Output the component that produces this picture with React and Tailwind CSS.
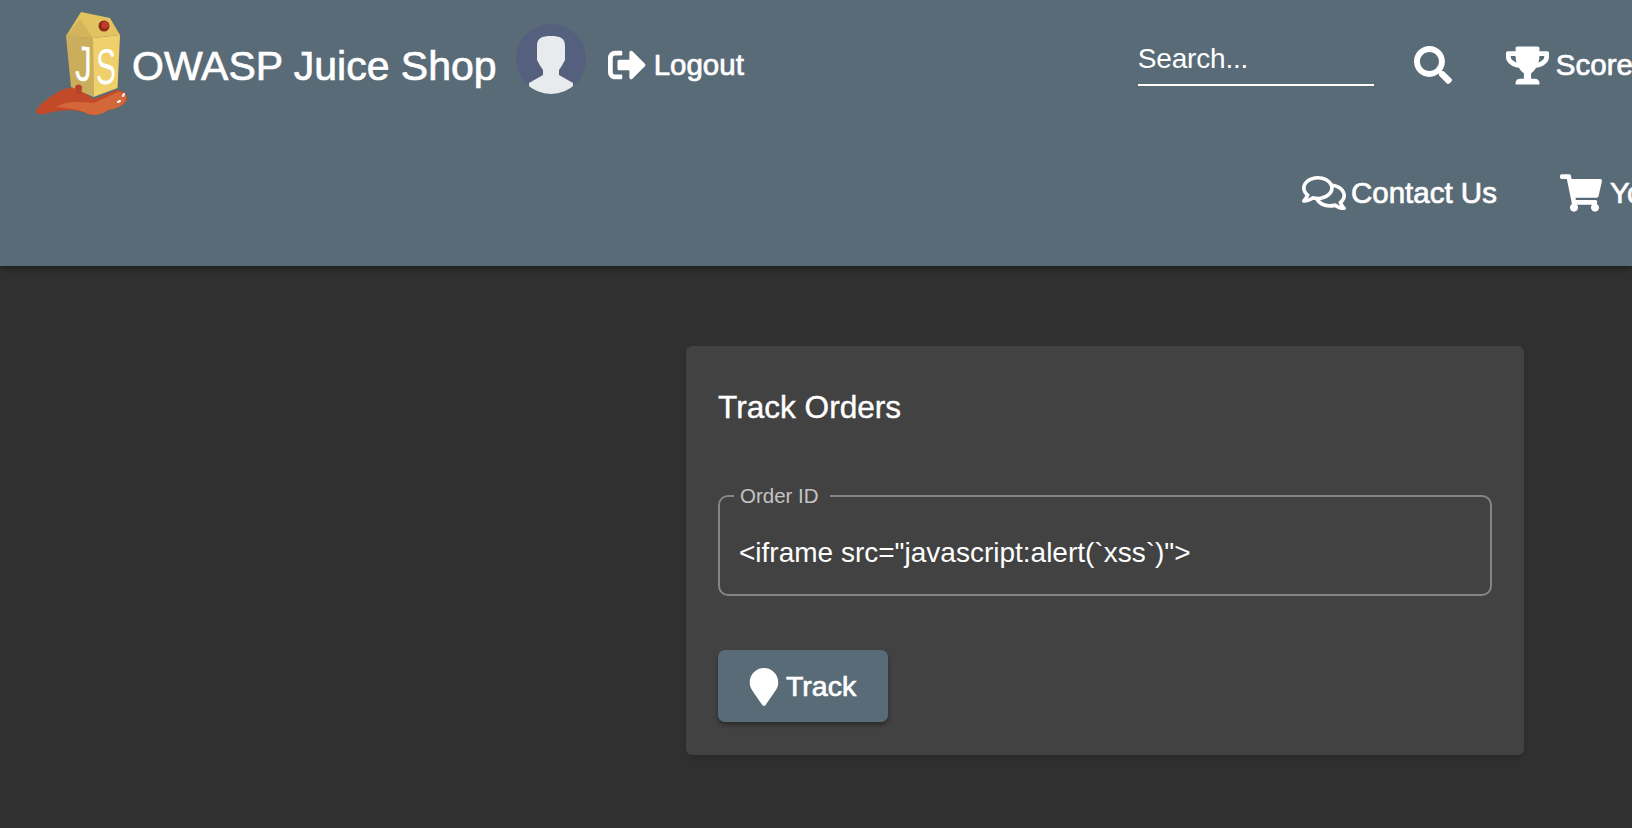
import React from 'react'
import { FaSearch, FaTrophy, FaRegComments, FaShoppingCart, FaMapMarker, FaSignOutAlt } from 'react-icons/fa'

function Logo() {
  return (
    <svg viewBox="0 0 110 115" className="w-[110px] h-[115px] shrink-0 mt-[-5px]">
      {/* puddle */}
      <g transform="translate(0 2)">
        <path d="M6 104 C10 96 20 90 28 85 C34 81 42 80 46 81 L64 92 L87 83 C92 83 98 87 97 92 C96 98 86 102 78 103 C72 108 62 110 54 105 C42 102 28 103 18 106 C12 108 6 108 6 104 Z" fill="#c24a28" />
        <path d="M26 100 C40 92 56 96 64 96 L88 85 C94 85 97 88 96 92 C95 98 86 102 78 103 C72 108 62 110 54 105 C46 102 36 101 26 100 Z" fill="#d4673a" />
        <path d="M88 95 L90 94 M93 89 L94 87" stroke="#fff" strokeWidth="2" strokeLinecap="round" />
      </g>
      {/* carton */}
      <path d="M36 31 L63 33 L63.5 92 L41 82 Z" fill="#cbae5b" />
      <path d="M63 33 L90 30 L87.5 83 L63.5 92 Z" fill="#f0d06a" />
      <path d="M36 31 L51 7 L80 13 L90 30 L63 33 Z" fill="#e3c35f" />
      <path d="M36 31 L50 14 L63 33 Z" fill="#d2b45c" />
      <circle cx="74" cy="21" r="5.5" fill="#8c2a1c" />
      <circle cx="75" cy="20" r="3.5" fill="#c23c2a" />
      <path d="M45 83 a3.5 3.5 0 0 1 7 0 l-1 6 h-4 z" fill="#b5432a" />
      {/* letters */}
      <text transform="translate(45 75) skewY(6)" fontFamily="Liberation Sans, sans-serif" fontWeight="400" fontSize="50" fill="#fff" textLength="17" lengthAdjust="spacingAndGlyphs">J</text>
      <text transform="translate(66 80) skewY(-6)" fontFamily="Liberation Sans, sans-serif" fontWeight="400" fontSize="50" fill="#fff" textLength="20" lengthAdjust="spacingAndGlyphs">S</text>
    </svg>
  )
}

function Avatar() {
  return (
    <svg viewBox="0 0 70 70" className="w-[70px] h-[70px] shrink-0 mt-[-12px]">
      <circle cx="35" cy="35" r="35" fill="#555f7e" />
      <clipPath id="avatar-clip"><circle cx="35" cy="35" r="35" /></clipPath>
      <path clipPath="url(#avatar-clip)" d="M21 22 C21 14 26 12 35 12 C44 12 49 14 49 22 L49 36 C47 40 45 43 43 46 L43 51 L57 59 L57 72 L13 72 L13 59 L27 51 L27 46 C25 43 23 40 21 36 Z" fill="#e8ebed" />
    </svg>
  )
}

const medium = "text-[29.5px] [-webkit-text-stroke:0.7px_white]"

export default function App() {
  return (
    <div className="h-[828px] bg-[#303030] overflow-hidden font-['Liberation_Sans',Arial,sans-serif] text-white">
      {/* Toolbar */}
      <header className="h-[266px] bg-[#5a6b78] overflow-hidden shadow-[0_2px_6px_rgba(0,0,0,0.45)] relative">
        <div className="flex items-center h-[130px] pl-[30px] w-[1800px]">
          <Logo />
          <span className="ml-[-8px] text-[41px] leading-none mt-[2px] [-webkit-text-stroke:0.7px_white]">OWASP Juice Shop</span>
          <div className="ml-[19px]"><Avatar /></div>
          <FaSignOutAlt className="ml-[22px] text-[38px]" />
          <span className={`ml-[8px] ${medium}`}>Logout</span>
          <div className="ml-[394px] w-[236px] border-b-2 border-white h-[50px] mt-[-8px] flex items-center pb-[2px]">
            <span className="text-[28px] tracking-[-0.2px]">Search...</span>
          </div>
          <FaSearch className="ml-[40px] text-[38px]" />
          <FaTrophy className="ml-[54px] text-[43px]" />
          <span className={`ml-[7px] ${medium}`}>Score Board</span>
        </div>
        <div className="flex items-center h-[126px] pl-[1302px] w-[1800px]">
          <FaRegComments className="text-[44px]" />
          <span className={`ml-[5px] ${medium}`}>Contact Us</span>
          <FaShoppingCart className="ml-[63px] text-[42px]" />
          <span className={`ml-[8px] ${medium}`}>Your Basket</span>
        </div>
      </header>

      {/* Track orders card */}
      <main className="pt-[80px] pl-[686px]">
        <div className="w-[838px] h-[409px] bg-[#424242] rounded-[6px] shadow-md px-[32px] pt-[41px]">
          <h1 className="text-[31.6px] leading-[40px] [-webkit-text-stroke:0.4px_white]">Track Orders</h1>
          <fieldset className="mt-[58px] h-[111px] border-2 border-[#858585] rounded-[10px] px-[14px]">
            <legend className="text-[20.5px] leading-[22px] text-[#c4c4c4] pl-[6px] pr-[11px]">Order ID</legend>
            <div className="text-[28px] leading-[32px] mt-[30px] pl-[5px]">{'<iframe src="javascript:alert(`xss`)">'}</div>
          </fieldset>
          <button className="mt-[54px] w-[170px] h-[72px] bg-[#5a6b78] rounded-[7px] shadow-[0_3px_4px_rgba(0,0,0,0.35)] flex items-center justify-start pl-[27px] gap-[3px]">
            <FaMapMarker className="text-[38px] mt-[2px]" />
            <span className="text-[28.5px] [-webkit-text-stroke:0.7px_white]">Track</span>
          </button>
        </div>
      </main>
    </div>
  )
}
